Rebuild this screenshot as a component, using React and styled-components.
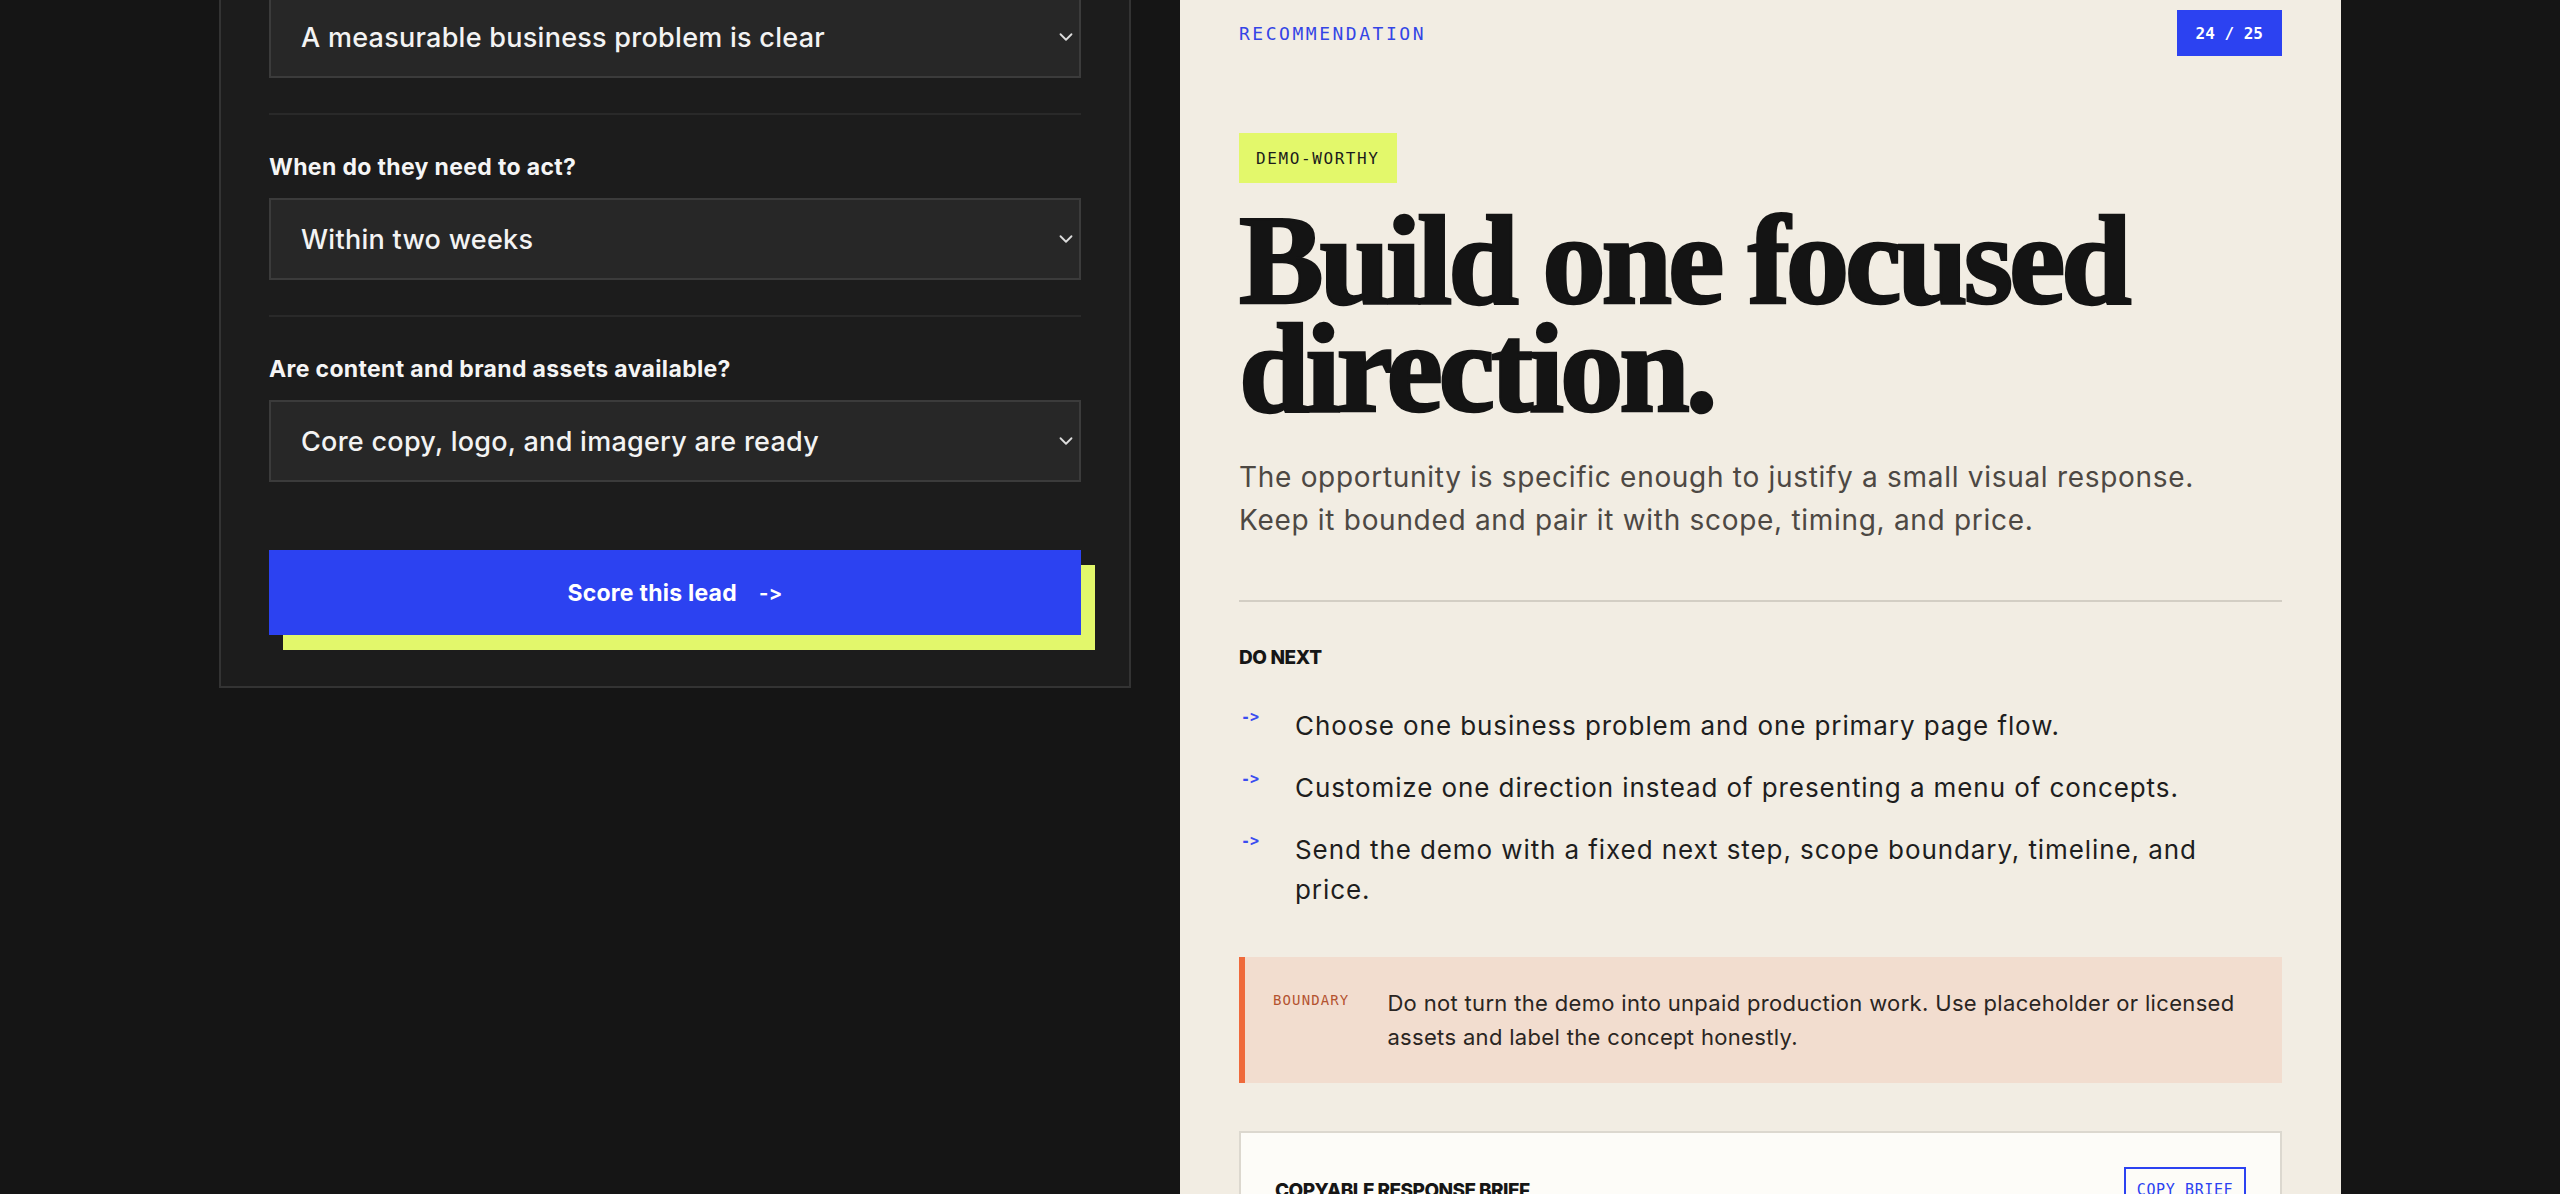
import React from "react";
import styled, { createGlobalStyle } from "styled-components";
import { ChevronDown } from "lucide-react";

const GlobalStyle = createGlobalStyle`
  html, body {
    margin: 0;
    background: #151515;
    overflow: hidden;
  }
  body {
    font-family: Inter, "Noto Sans", sans-serif;
    -webkit-font-smoothing: antialiased;
  }
  * { box-sizing: border-box; }
`;

const fields = [
  { value: "A measurable business problem is clear" },
  { label: "When do they need to act?", value: "Within two weeks" },
  { label: "Are content and brand assets available?", value: "Core copy, logo, and imagery are ready" },
];

const steps = [
  "Choose one business problem and one primary page flow.",
  "Customize one direction instead of presenting a menu of concepts.",
  "Send the demo with a fixed next step, scope boundary, timeline, and price.",
];

const App = () => {
  return (
    <>
      <GlobalStyle />
      <Layout>
        <FormPanel>
          {fields.map((f, i) => (
            <Field key={i} last={i === fields.length - 1}>
              {f.label && <Label>{f.label}</Label>}
              <SelectWrap>
                <Select defaultValue={f.value}>
                  <option>{f.value}</option>
                </Select>
                <Chevron>
                  <ChevronDown size={22} strokeWidth={2} />
                </Chevron>
              </SelectWrap>
            </Field>
          ))}
          <ScoreButton>
            Score this lead <span>-&gt;</span>
          </ScoreButton>
        </FormPanel>

        <ResultPanel>
          <TopRow>
            <Eyebrow>RECOMMENDATION</Eyebrow>
            <Counter>24 / 25</Counter>
          </TopRow>

          <Verdict>DEMO-WORTHY</Verdict>
          <Headline>
            Build one focused
            <br />
            direction.
          </Headline>
          <Lead>
            The opportunity is specific enough to justify a small visual response. Keep it bounded and pair it with
            scope, timing, and price.
          </Lead>

          <Rule />

          <SectionTitle>DO NEXT</SectionTitle>
          <Steps>
            {steps.map((s, i) => (
              <Step key={i}>
                <StepArrow>-&gt;</StepArrow>
                <StepText>{s}</StepText>
              </Step>
            ))}
          </Steps>

          <Callout>
            <CalloutTag>BOUNDARY</CalloutTag>
            <CalloutText>
              Do not turn the demo into unpaid production work. Use placeholder or licensed assets and label the concept
              honestly.
            </CalloutText>
          </Callout>

          <BriefCard>
            <BriefHead>
              <BriefTitle>COPYABLE RESPONSE BRIEF</BriefTitle>
              <CopyButton>COPY BRIEF</CopyButton>
            </BriefHead>
            <BriefBody>
              Thanks for the context. I can put together one focused visual direction around the main business problem,
              with a fixed scope, a short timeline and a clear price before any production work starts.
            </BriefBody>
          </BriefCard>
        </ResultPanel>
      </Layout>
    </>
  );
};

const Layout = styled.main`
  display: grid;
  grid-template-columns: 912px 1161px;
  column-gap: 49px;
  align-items: start;
  width: 2122px;
  margin: -54px auto 0;
`;

/* left: the scoring form */
const FormPanel = styled.section`
  background: #1c1c1c;
  border: 2px solid #333333;
  padding: 48px 48px 51px;
`;

const Field = styled.div`
  padding-bottom: ${(p) => (p.last ? "0" : "35px")};
  margin-bottom: ${(p) => (p.last ? "0" : "38px")};
  border-bottom: ${(p) => (p.last ? "none" : "2px solid #292929")};
`;

const Label = styled.div`
  color: #f5f5f5;
  font-size: 23px;
  font-weight: 700;
  line-height: 28px;
  letter-spacing: 0.015em;
  margin-bottom: 17px;
`;

const SelectWrap = styled.div`
  position: relative;
`;

const Select = styled.select`
  appearance: none;
  width: 100%;
  height: 82px;
  background: #272727;
  border: 2px solid #3b3b3b;
  border-radius: 0;
  color: #f3f3f3;
  font-family: Inter, "Noto Sans", sans-serif;
  font-size: 27px;
  font-weight: 500;
  letter-spacing: 0.01em;
  padding: 0 40px 0 30px;
  outline: none;
`;

const Chevron = styled.span`
  position: absolute;
  right: 4px;
  top: 50%;
  transform: translateY(-50%);
  display: flex;
  color: #dcdcdc;
  pointer-events: none;
`;

const ScoreButton = styled.button`
  display: flex;
  align-items: center;
  justify-content: center;
  gap: 22px;
  width: 100%;
  height: 85px;
  margin-top: 68px;
  border: none;
  border-radius: 0;
  background: #2c42f1;
  box-shadow: 14px 15px 0 #e2f76b;
  color: #ffffff;
  font-family: Inter, "Noto Sans", sans-serif;
  font-size: 23px;
  font-weight: 700;
  letter-spacing: 0.01em;
  cursor: pointer;

  span {
    font-size: 20px;
    letter-spacing: 0.02em;
  }
`;

/* right: the recommendation sheet */
const ResultPanel = styled.section`
  background: #f2ede3;
  padding: 64px 59px 120px;
`;

const TopRow = styled.div`
  display: flex;
  justify-content: space-between;
  align-items: center;
`;

const Eyebrow = styled.div`
  font-family: "DejaVu Sans Mono", "Liberation Mono", monospace;
  font-size: 18px;
  letter-spacing: 0.14em;
  color: #3445e6;
`;

const Counter = styled.div`
  display: flex;
  align-items: center;
  height: 46px;
  padding: 0 19px;
  background: #2c42f1;
  color: #ffffff;
  font-family: "DejaVu Sans Mono", "Liberation Mono", monospace;
  font-size: 16px;
  font-weight: 700;
  white-space: pre;
`;

const Verdict = styled.div`
  display: inline-flex;
  align-items: center;
  height: 50px;
  margin-top: 77px;
  padding: 0 17px;
  background: #e3f86b;
  color: #1b1b1b;
  font-family: "DejaVu Sans Mono", "Liberation Mono", monospace;
  font-size: 16px;
  letter-spacing: 0.1em;
`;

const Headline = styled.h1`
  margin: 23px 0 0;
  font-family: "Liberation Serif", "Times New Roman", serif;
  font-size: 127px;
  font-weight: 700;
  line-height: 108px;
  letter-spacing: -0.033em;
  color: #141414;
  -webkit-text-stroke: 2.5px #141414;
`;

const Lead = styled.p`
  margin: 34px 0 0;
  max-width: 1010px;
  font-size: 28px;
  line-height: 43px;
  letter-spacing: 0.025em;
  color: #4d4843;
`;

const Rule = styled.hr`
  margin: 58px 0 0;
  border: none;
  border-top: 2px solid #d3cec4;
`;

const SectionTitle = styled.div`
  margin-top: 44px;
  font-size: 19px;
  font-weight: 800;
  line-height: 24px;
  letter-spacing: -0.02em;
  color: #161616;
`;

const Steps = styled.ul`
  list-style: none;
  margin: 36px 0 0;
  padding: 0;
  display: flex;
  flex-direction: column;
  gap: 22px;
`;

const Step = styled.li`
  display: grid;
  grid-template-columns: 56px 1fr;
  align-items: start;
`;

const StepArrow = styled.span`
  margin-top: 1px;
  padding-left: 2px;
  font-family: "DejaVu Sans Mono", "Liberation Mono", monospace;
  font-size: 15px;
  font-weight: 700;
  line-height: 20px;
  color: #3a4cf0;
`;

const StepText = styled.span`
  max-width: 930px;
  font-size: 26px;
  line-height: 40px;
  letter-spacing: 0.035em;
  color: #1e1e1e;
`;

const Callout = styled.div`
  display: grid;
  grid-template-columns: auto 1fr;
  column-gap: 38px;
  margin-top: 47px;
  padding: 29px 30px 29px 28px;
  background: #f2ddcf;
  border-left: 6px solid #ef6a3b;
`;

const CalloutTag = styled.div`
  margin-top: 4px;
  font-family: "DejaVu Sans Mono", "Liberation Mono", monospace;
  font-size: 14px;
  letter-spacing: 0.08em;
  line-height: 20px;
  color: #b4532f;
`;

const CalloutText = styled.div`
  font-size: 22px;
  line-height: 34px;
  letter-spacing: 0.015em;
  color: #2a2522;
`;

const BriefCard = styled.div`
  margin-top: 48px;
  background: #fdfcf8;
  border: 2px solid #dcd8cf;
  padding: 34px 34px 40px;
`;

const BriefHead = styled.div`
  display: flex;
  justify-content: space-between;
  align-items: center;
`;

const BriefTitle = styled.div`
  font-size: 19px;
  font-weight: 800;
  letter-spacing: -0.03em;
  color: #161616;
`;

const CopyButton = styled.button`
  height: 46px;
  width: 122px;
  background: transparent;
  border: 2px solid #2c42f1;
  border-radius: 0;
  color: #2c42f1;
  font-family: "DejaVu Sans Mono", "Liberation Mono", monospace;
  font-size: 15px;
  letter-spacing: 0.04em;
  cursor: pointer;
`;

const BriefBody = styled.p`
  margin: 24px 0 0;
  font-size: 22px;
  line-height: 34px;
  color: #333;
`;

export default App;
